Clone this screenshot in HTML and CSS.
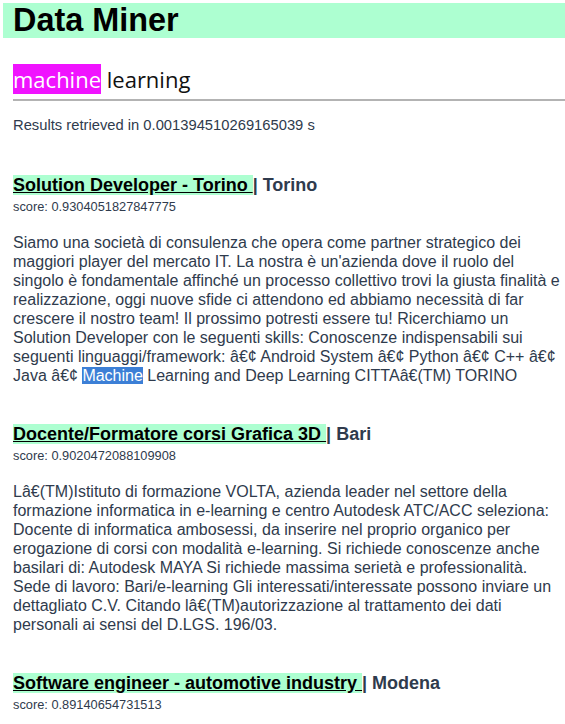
FILE: index.html
```html
<!DOCTYPE html>
<html>
<head>
<meta charset="utf-8">
<link rel="stylesheet" href="styles.css">
</head>
<body>
<div class="header"><h1 class="brand">Data Miner</h1></div>
<main class="content">
  <div class="query"><span class="hit">machine</span> learning</div>
  <p class="timing">Results retrieved in 0.001394510269165039 s</p>

  <section class="result">
    <h2 class="result-title"><a class="title-link" href="#">Solution Developer - Torino </a> | Torino</h2>
    <div class="score">score: 0.9304051827847775</div>
    <p class="desc">Siamo una società di consulenza che opera come partner strategico dei maggiori player del mercato IT. La nostra è un'azienda dove il ruolo del singolo è fondamentale affinché un processo collettivo trovi la giusta finalità e realizzazione, oggi nuove sfide ci attendono ed abbiamo necessità di far crescere il nostro team! Il prossimo potresti essere tu! Ricerchiamo un Solution Developer con le seguenti skills: Conoscenze indispensabili sui seguenti linguaggi/framework: â€¢ Android System â€¢ Python â€¢ C++ â€¢ Java â€¢ <span class="sel">Machine</span> Learning and Deep Learning CITTAâ€(TM) TORINO</p>
  </section>

  <section class="result">
    <h2 class="result-title"><a class="title-link" href="#">Docente/Formatore corsi Grafica 3D </a> | Bari</h2>
    <div class="score">score: 0.9020472088109908</div>
    <p class="desc">Lâ€(TM)Istituto di formazione VOLTA, azienda leader nel settore della formazione informatica in e-learning e centro Autodesk ATC/ACC seleziona: Docente di informatica ambosessi, da inserire nel proprio organico per erogazione di corsi con modalità e-learning. Si richiede conoscenze anche basilari di: Autodesk MAYA Si richiede massima serietà e professionalità. Sede di lavoro: Bari/e-learning Gli interessati/interessate possono inviare un dettagliato C.V. Citando lâ€(TM)autorizzazione al trattamento dei dati personali ai sensi del D.LGS. 196/03.</p>
  </section>

  <section class="result">
    <h2 class="result-title"><a class="title-link" href="#">Software engineer - automotive industry </a> | Modena</h2>
    <div class="score">score: 0.89140654731513</div>
  </section>
</main>
</body>
</html>
```
FILE: styles.css
```css
html, body {
  margin: 0;
  padding: 0;
}
html {
  overflow-x: hidden;
}
body {
  padding: 3px 0 0 3px;
  font-family: "Liberation Sans", Arial, sans-serif;
  color: #2f3b4d;
  background: #fff;
}
.header {
  background: #adffd1;
  padding: 0 10px;
  height: 35px;
  display: flex;
  align-items: center;
}
.brand {
  margin: 0;
  font-size: 32.4px;
  font-weight: bold;
  color: #000;
  line-height: 35px;
}
.content {
  padding: 0 0 0 10px;
}
.query {
  margin-top: 26px;
  font-family: "Open Sans", "Noto Sans", sans-serif;
  font-size: 22px;
  color: #111;
  line-height: 30px;
  padding-bottom: 5px;
  border-bottom: 2px solid #b3b3b3;
}
.hit {
  background: #f013ff;
  color: #fff;
}
.timing {
  margin: 15px 0 0;
  font-size: 14.75px;
  line-height: 19px;
}
.result {
  margin-top: 39px;
}
.result + .result {
  margin-top: 38px;
}
.result-title {
  margin: 0;
  font-size: 18px;
  line-height: 22px;
  font-weight: bold;
  color: #2f3b4d;
}
.title-link {
  background: #adffd1;
  color: #000;
  text-decoration: underline;
}
.score {
  font-size: 12.8px;
  line-height: 16px;
  margin-top: 3px;
}
.desc {
  margin: 18px 0 0;
  font-size: 16px;
  line-height: 19px;
}
.sel {
  background: #3c7fd6;
  color: #fff;
}
```
